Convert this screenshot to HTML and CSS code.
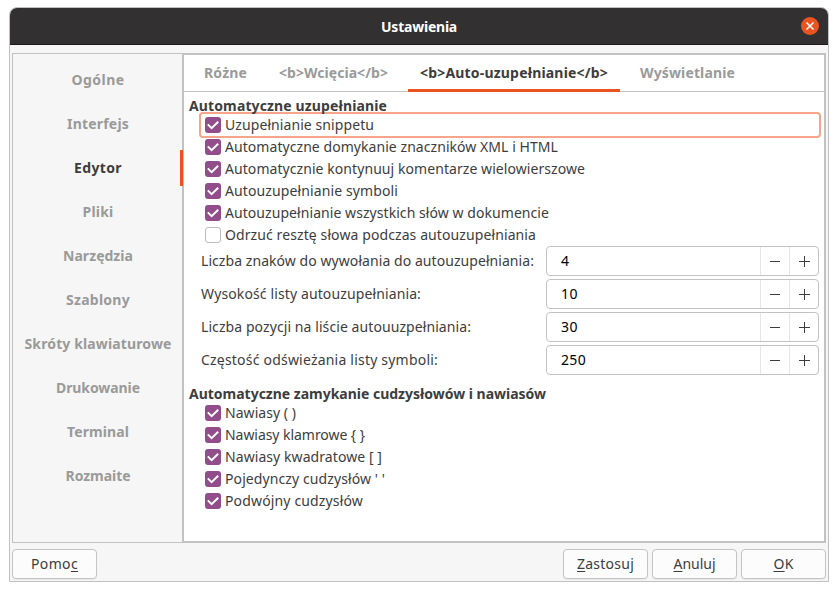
FILE: index.html
```html
<!DOCTYPE html>
<html lang="pl">
<head>
<meta charset="utf-8">
<title>Ustawienia</title>
<link rel="stylesheet" href="styles.css">
</head>
<body>
<svg class="defs" width="0" height="0"><defs>
<symbol id="tick" viewBox="0 0 16 16"><path d="M2.8 7.4 6.6 11.1 13.2 4.8" fill="none" stroke="#fff" stroke-width="2"/></symbol>
<symbol id="minus" viewBox="0 0 12 12"><path d="M1 5.5H11" stroke="#3d3d3d" fill="none"/></symbol>
<symbol id="plus" viewBox="0 0 12 12"><path d="M1 5.5H12M6.5 0V11" stroke="#3d3d3d" fill="none"/></symbol>
</defs></svg>
<div class="window">
  <header class="titlebar">
    <span class="title" data-w="76">Ustawienia</span>
    <button class="close" aria-label="Zamknij"><svg width="18" height="18" viewBox="0 0 18 18"><path d="M5.5 5.5 12.5 12.5M12.5 5.5 5.5 12.5" stroke="#fff" stroke-width="1.5" fill="none"/></svg></button>
  </header>
  <main class="body">
    <nav class="sidebar">
      <a class="item"><span data-w="53">Ogólne</span></a>
      <a class="item"><span data-w="62">Interfejs</span></a>
      <a class="item active"><span data-w="48">Edytor</span></a>
      <a class="item"><span data-w="31">Pliki</span></a>
      <a class="item"><span data-w="70">Narzędzia</span></a>
      <a class="item"><span data-w="64">Szablony</span></a>
      <a class="item"><span data-w="147">Skróty klawiaturowe</span></a>
      <a class="item"><span data-w="84">Drukowanie</span></a>
      <a class="item"><span data-w="62">Terminal</span></a>
      <a class="item"><span data-w="65">Rozmaite</span></a>
    </nav>
    <section class="page">
      <div class="tabs">
        <a class="tab"><span data-w="43">Różne</span></a>
        <a class="tab"><span data-w="109">&lt;b&gt;Wcięcia&lt;/b&gt;</span></a>
        <a class="tab active"><span data-w="188">&lt;b&gt;Auto-uzupełnianie&lt;/b&gt;</span></a>
        <a class="tab"><span data-w="95">Wyświetlanie</span></a>
      </div>
      <div class="content">
        <h2><span data-w="198">Automatyczne uzupełnianie</span></h2>
        <div class="checks">
          <label class="check focused"><i class="box on"><svg><use href="#tick"/></svg></i><span data-w="149">Uzupełnianie snippetu</span></label>
          <label class="check"><i class="box on"><svg><use href="#tick"/></svg></i><span data-w="333">Automatyczne domykanie znaczników XML i HTML</span></label>
          <label class="check"><i class="box on"><svg><use href="#tick"/></svg></i><span data-w="360">Automatycznie kontynuuj komentarze wielowierszowe</span></label>
          <label class="check"><i class="box on"><svg><use href="#tick"/></svg></i><span data-w="173">Autouzupełnianie symboli</span></label>
          <label class="check"><i class="box on"><svg><use href="#tick"/></svg></i><span data-w="324">Autouzupełnianie wszystkich słów w dokumencie</span></label>
          <label class="check"><i class="box"></i><span data-w="311">Odrzuć resztę słowa podczas autouzupełniania</span></label>
        </div>
        <div class="fields">
          <div class="field"><span data-w="333">Liczba znaków do wywołania do autouzupełniania:</span><div class="spin"><span class="value" data-w="9">4</span><b><svg><use href="#minus"/></svg></b><b><svg><use href="#plus"/></svg></b></div></div>
          <div class="field"><span data-w="220">Wysokość listy autouzupełniania:</span><div class="spin"><span class="value" data-w="17">10</span><b><svg><use href="#minus"/></svg></b><b><svg><use href="#plus"/></svg></b></div></div>
          <div class="field"><span data-w="270">Liczba pozycji na liście autouuzpełniania:</span><div class="spin"><span class="value" data-w="17">30</span><b><svg><use href="#minus"/></svg></b><b><svg><use href="#plus"/></svg></b></div></div>
          <div class="field"><span data-w="237">Częstość odświeżania listy symboli:</span><div class="spin"><span class="value" data-w="25">250</span><b><svg><use href="#minus"/></svg></b><b><svg><use href="#plus"/></svg></b></div></div>
        </div>
        <h2 class="second"><span data-w="357">Automatyczne zamykanie cudzysłowów i nawiasów</span></h2>
        <div class="checks">
          <label class="check"><i class="box on"><svg><use href="#tick"/></svg></i><span data-w="71">Nawiasy ( )</span></label>
          <label class="check"><i class="box on"><svg><use href="#tick"/></svg></i><span data-w="140">Nawiasy klamrowe { }</span></label>
          <label class="check"><i class="box on"><svg><use href="#tick"/></svg></i><span data-w="157">Nawiasy kwadratowe [ ]</span></label>
          <label class="check"><i class="box on"><svg><use href="#tick"/></svg></i><span data-w="160">Pojedynczy cudzysłów ' '</span></label>
          <label class="check"><i class="box on"><svg><use href="#tick"/></svg></i><span data-w="138">Podwójny cudzysłów</span></label>
        </div>
      </div>
    </section>
  </main>
  <footer class="actions">
    <button class="btn help"><span data-w="47">Pomo<u>c</u></span></button>
    <button class="btn"><span data-w="57"><u>Z</u>astosuj</span></button>
    <button class="btn"><span data-w="42"><u>A</u>nuluj</span></button>
    <button class="btn"><span data-w="20"><u>O</u>K</span></button>
  </footer>
</div>
<script src="fit.js"></script>
</body>
</html>
```

FILE: styles.css
```css
* { box-sizing: border-box; }
body {
  margin: 0;
  padding: 7px 9px 9px;
  background: #fff;
  color: #3d3d3d;
  font: 14px/18px "Noto Sans", "Open Sans", sans-serif;
}
.defs { position: absolute; }
span { white-space: nowrap; }
.window {
  width: 820px;
  height: 575px;
  border: 1px solid #c0c0c0;
  border-radius: 8px 8px 0 0;
  background: #f6f6f6;
  display: flex;
  flex-direction: column;
}
.titlebar {
  height: 37px;
  flex: none;
  display: grid;
  grid-template-columns: 1fr auto 1fr;
  align-items: center;
  padding-right: 9px;
  background: #323031;
  border-bottom: 1px solid #1d1b1c;
  border-radius: 7px 7px 0 0;
  color: #fff;
}
.title { grid-column: 2; font-weight: 700; margin-left: 9px; padding-top: 1px; }
.close {
  justify-self: end;
  width: 18px;
  height: 18px;
  padding: 0;
  border: 0;
  border-radius: 50%;
  background: #e95420;
}
.close svg { display: block; }
.body {
  display: flex;
  margin: 8px 2px 0;
  height: 490px;
  flex: none;
}
.sidebar {
  width: 170px;
  border: 1px solid #c2c2c2;
  border-right: 0;
  padding-top: 8px;
}
.item {
  display: flex;
  align-items: center;
  justify-content: center;
  height: 36px;
  margin-bottom: 8px;
  padding-left: 1px;
  color: #9a9a9a;
  font-weight: 700;
}
.item.active {
  color: #3d3d3d;
  position: relative;
}
.item.active::after {
  content: "";
  position: absolute;
  right: -1px;
  top: 0;
  width: 3px;
  height: 36px;
  background: #e95420;
}
.page {
  flex: 1;
  border: 2px solid #c2c2c2;
  background: #fff;
}
.tabs {
  display: flex;
  gap: 8px;
  height: 37px;
  padding-left: 8px;
  border-bottom: 1px solid #c2c2c2;
}
.tab {
  display: flex;
  align-items: center;
  height: 37px;
  padding: 0 12px;
  border-bottom: 3px solid transparent;
  border-top: 1px solid transparent;
  color: #9a9a9a;
  font-weight: 700;
}
.tab.active { color: #3d3d3d; border-bottom-color: #e95420; }
.content { padding: 5px 3px 0 5px; }
h2 {
  margin: 0;
  height: 17px;
  font-size: 14px;
  line-height: 17px;
}
h2.second { margin-top: 10px; }
.checks { padding-left: 10px; }
.check {
  display: flex;
  align-items: center;
  gap: 4px;
  height: 22px;
  padding-left: 6px;
}
.check.focused {
  height: 26px;
  margin: -2px 0;
  padding-left: 4px;
  border: 2px solid #f4a58a;
  border-radius: 4px;
}
.box {
  width: 16px;
  height: 16px;
  border: 1px solid #bcbcbc;
  border-radius: 3px;
  background: #fff;
}
.box.on { border: 0; background: #924d8b; }
.box svg { display: block; width: 16px; height: 16px; }
.fields {
  display: grid;
  gap: 3px;
  padding: 0 2px 0 12px;
}
.field {
  display: flex;
  align-items: center;
  justify-content: space-between;
}
.spin {
  display: flex;
  align-items: center;
  width: 273px;
  height: 30px;
  border: 1px solid #c2c2c2;
  border-radius: 4px;
  color: #000;
}
.value { flex: 1; padding-left: 14px; }
.spin b {
  display: flex;
  justify-content: center;
  align-items: center;
  width: 29px;
  height: 28px;
  border-left: 1px solid #e6e6e6;
}
.spin b svg { width: 12px; height: 12px; margin-top: 2px; }
.actions {
  display: flex;
  gap: 4px;
  padding: 6px 2px 0;
}
.btn {
  width: 85px;
  height: 30px;
  padding: 0;
  border: 1px solid #c4c4c4;
  border-radius: 4px;
  background: #fcfcfc;
  box-shadow: 0 1px 1px rgba(0, 0, 0, .06);
  color: inherit;
  font: inherit;
}
.btn.help { margin-right: auto; }
u { text-underline-offset: 2px; }
```

FILE: fit.js
```js
// Tracks each label so that it takes the width set for it in data-w.
for (const el of document.querySelectorAll("[data-w]")) {
  const range = document.createRange();
  range.selectNodeContents(el);
  const natural = range.getBoundingClientRect().width;
  const count = el.textContent.length;
  el.style.letterSpacing = (Number(el.dataset.w) - natural) / count + "px";
}
```
